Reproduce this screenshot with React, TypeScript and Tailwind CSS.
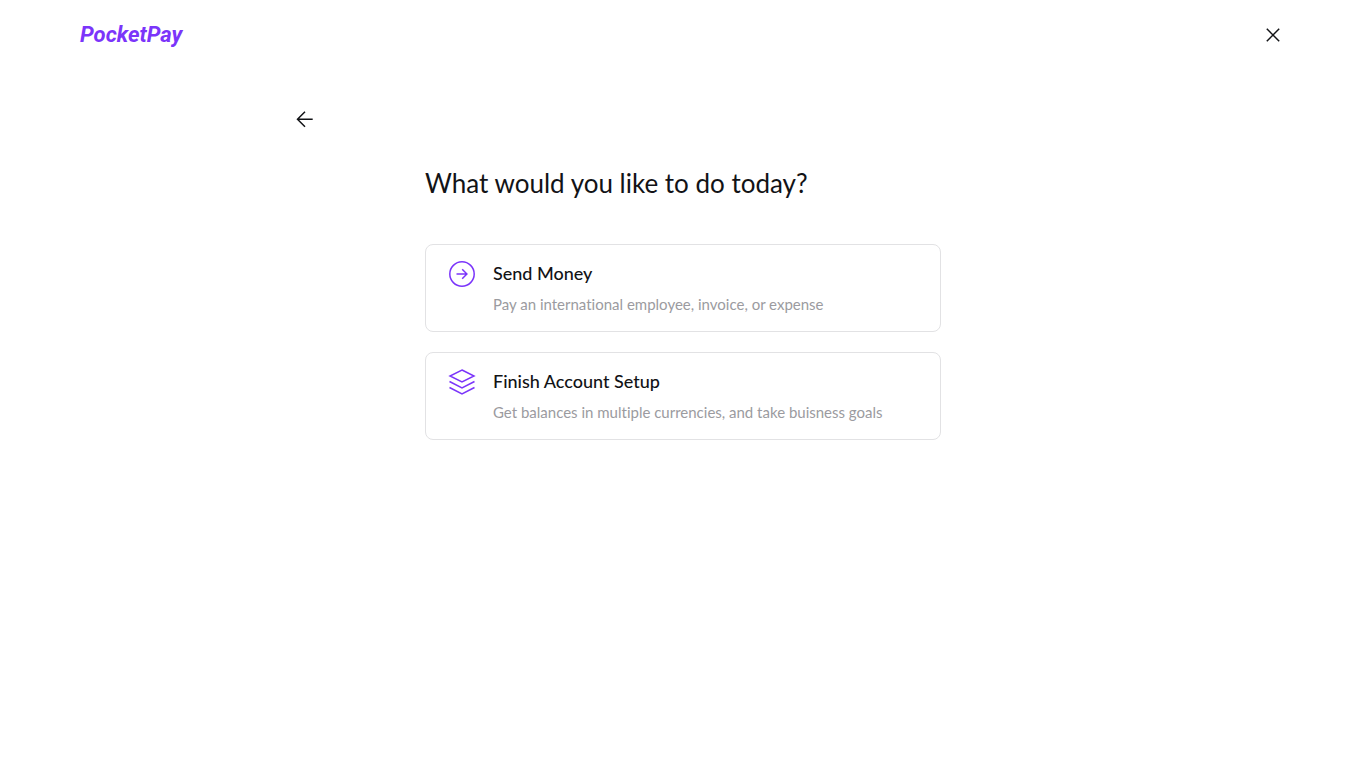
import type { ReactNode } from "react";

type Option = {
  title: string;
  description: string;
  icon: ReactNode;
};

const options: Option[] = [
  {
    title: "Send Money",
    description: "Pay an international employee, invoice, or expense",
    icon: (
      <>
        <circle cx="14" cy="14" r="12.2" />
        <path d="M8.5 14H19M14.200 9.3 18.900 14l-4.700 4.700" />
      </>
    ),
  },
  {
    title: "Finish Account Setup",
    description: "Get balances in multiple currencies, and take buisness goals",
    icon: (
      <>
        <path d="M14 2 26 8 14 14 2 8Z" />
        <path d="M1.500 13.500 14 20l12.500-6.500" />
        <path d="M1.500 19.500 14 26l12.500-6.500" />
      </>
    ),
  },
];

function OptionCard({ title, description, icon }: Option) {
  return (
    <button
      type="button"
      className="flex w-full cursor-pointer items-start gap-[17px] rounded-lg border border-[#e2e2e4] px-[22px] py-[15px] text-left"
    >
      <svg
        className="size-7 shrink-0 text-[#7b35fa]"
        viewBox="0 0 28 28"
        fill="none"
        stroke="currentColor"
        strokeWidth="1.5"
        aria-hidden="true"
      >
        {icon}
      </svg>
      <span className="flex flex-col gap-1.5">
        <span className="text-lg leading-[26px] font-medium text-[#121316]">{title}</span>
        <span className="text-[15px] leading-6 text-[#9b9ba0]">{description}</span>
      </span>
    </button>
  );
}

export default function App() {
  return (
    <div className="min-h-screen bg-white font-['Lato','Noto_Sans',sans-serif] text-[#121316] [font-variant-ligatures:none]">
      <header className="flex items-center justify-between px-20 pt-4">
        <a
          href="#"
          className="font-['Roboto','Liberation_Sans',sans-serif] text-[22px] leading-[38px] font-bold text-[#7b35fa] italic"
        >
          PocketPay
        </a>
        <button type="button" aria-label="Close" className="cursor-pointer p-1.5">
          <svg className="size-[14px]" viewBox="0 0 14 14" fill="none" stroke="currentColor" strokeWidth="1.5">
            <path d="M.8.8 13.200 13.200M13.200.8.8 13.200" />
          </svg>
        </button>
      </header>
      <main className="mx-auto max-w-[780px] pt-[53px]">
        <button type="button" aria-label="Back" className="block cursor-pointer">
          <svg className="size-6" viewBox="0 0 24 24" fill="none" stroke="currentColor" strokeWidth="1.5">
            <path d="M19.700 12.300H4.800M12 4.800 4.500 12.300 12 19.800" />
          </svg>
        </button>
        <section className="mx-auto max-w-[516px] pt-[34px]">
          <h1 className="text-[26px] leading-9">What would you like to do today?</h1>
          <div className="mt-[43px] flex flex-col gap-5">
            {options.map((option) => (
              <OptionCard key={option.title} {...option} />
            ))}
          </div>
        </section>
      </main>
    </div>
  );
}
